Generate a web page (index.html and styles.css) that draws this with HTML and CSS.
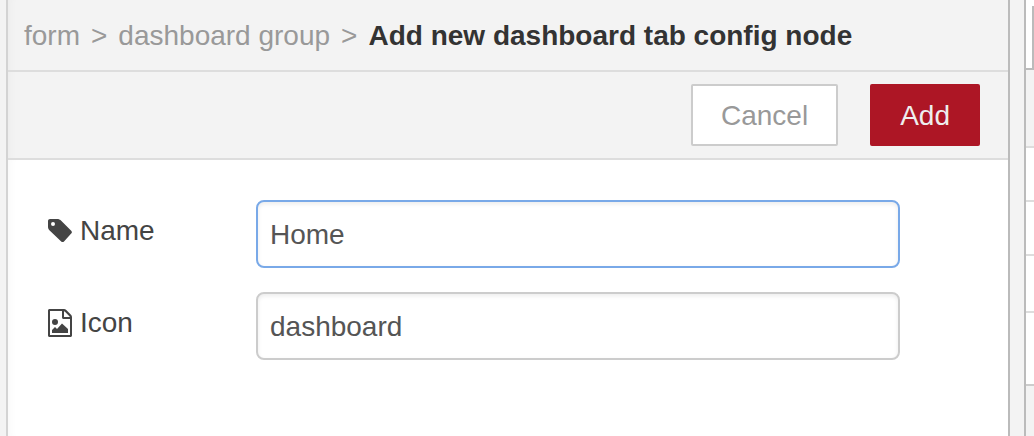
FILE: index.html
```html
<!DOCTYPE html>
<html lang="en">
<head>
<meta charset="utf-8">
<title>Add new dashboard tab config node</title>
<link rel="stylesheet" href="styles.css">
</head>
<body>
<div class="editor">
  <main class="tray">
    <header class="tray-header">
      <nav class="breadcrumbs" aria-label="Breadcrumb">
        <span>form</span>
        <span>&gt;</span>
        <span>dashboard group</span>
        <span>&gt;</span>
        <strong class="current">Add new dashboard tab config node</strong>
      </nav>
    </header>
    <div class="toolbar">
      <button type="button" class="button">Cancel</button>
      <button type="button" class="button primary">Add</button>
    </div>
    <form class="tray-body">
      <div class="form-row">
        <label for="node-name">
          <svg class="icon" viewBox="0 0 24 28" aria-hidden="true"><path fill-rule="evenodd" d="M2 2h7.5c1.1 0 2.4.6 3.200 1.300l10.500 10.500c.9.9.9 2 0 2.800l-7.200 7.800c-.8.8-2 .8-2.800 0L1.400 13.200C.6 12.400 0 11.100 0 10V4c0-1.100.9-2 2-2zM5 5a2 2 0 1 0 0 4a2 2 0 0 0 0-4z"/></svg>
          Name
        </label>
        <input id="node-name" class="focused" type="text" value="Home">
      </div>
      <div class="form-row">
        <label for="node-icon">
          <svg class="icon" viewBox="0 0 24 28" aria-hidden="true"><path fill-rule="evenodd" d="M1.500 0H16c.8 0 1.700.4 2.300 1l4.700 4.700c.6.6 1 1.500 1 2.300v18.500c0 .8-.7 1.500-1.500 1.500h-21C.7 28 0 27.300 0 26.500v-25C0 .7.7 0 1.500 0zM2 2v24h20V10h-6.500c-.8 0-1.500-.7-1.500-1.500V2zM16 2.200V8h5.800c-.1-.3-.2-.5-.4-.7l-4.700-4.700c-.2-.2-.4-.3-.7-.4z"/><circle cx="7" cy="13" r="3"/><path d="M4 24v-3l3-3 2 2 5-5.500 6 5.500v4z"/></svg>
          Icon
        </label>
        <input id="node-icon" type="text" value="dashboard">
      </div>
    </form>
  </main>
  <div class="separator"></div>
  <aside class="sidebar">
    <div class="sidebar-tabs"><div class="sidebar-tab"></div></div>
    <div class="sidebar-toolbar"></div>
    <div class="sidebar-row"></div>
    <div class="sidebar-row"></div>
    <div class="sidebar-row tall"></div>
    <div class="sidebar-row last"></div>
  </aside>
</div>
</body>
</html>
```
FILE: styles.css
```css
* {
  box-sizing: border-box;
}

body {
  margin: 0;
  background: #f3f3f3;
  color: #444;
  font: 28px/40px "Liberation Sans", Arial, sans-serif;
}

.editor {
  display: flex;
  min-height: 100vh;
  padding-left: 6px;
}

.tray {
  flex: 1;
  display: flex;
  flex-direction: column;
  border-left: 2px solid #d3d3d3;
  border-right: 2px solid #bbb;
  box-shadow: inset 8px 0 8px -6px rgba(0, 0, 0, 0.03);
}

.tray-header {
  padding: 16px 16px 14px;
  border-bottom: 2px solid #ddd;
  color: #999;
}

.breadcrumbs {
  display: flex;
  gap: 11px;
}

.current {
  color: #333;
}

.toolbar {
  display: flex;
  justify-content: flex-end;
  gap: 32px;
  padding: 12px 28px;
  border-bottom: 2px solid #ddd;
}

.button {
  padding: 10px 28px 8px;
  border: 2px solid #ccc;
  border-radius: 2px;
  background: #fff;
  color: #999;
  font: inherit;
}

.primary {
  border-color: #ad1625;
  background: #ad1625;
  color: #eee;
}

.tray-body {
  flex: 1;
  display: flex;
  flex-direction: column;
  gap: 24px;
  padding: 40px;
  background: #fff;
  box-shadow: inset 8px 0 8px -6px rgba(0, 0, 0, 0.03);
}

.form-row {
  display: flex;
  align-items: flex-start;
}

.form-row label {
  display: flex;
  align-items: center;
  gap: 8px;
  width: 208px;
  padding-top: 11px;
}

.icon {
  width: 24px;
  height: 28px;
  fill: #444;
}

.form-row input {
  width: 70%;
  height: 68px;
  padding: 10px 12px 8px;
  border: 2px solid #ccc;
  border-radius: 8px;
  outline: 0;
  background: #fff;
  box-shadow: inset 0 2px 4px rgba(0, 0, 0, 0.08);
  color: #555;
  font: inherit;
}

.form-row input.focused {
  border-color: #79a9e8;
}

.separator {
  width: 14px;
}

.sidebar {
  width: 10px;
  border-left: 2px solid #bbb;
}

.sidebar-tabs {
  padding-top: 6px;
  background: #fff;
}

.sidebar-tab {
  height: 64px;
  border-right: 2px solid #bbb;
  border-bottom: 2px solid #bbb;
}

.sidebar-toolbar {
  height: 78px;
  border-bottom: 2px solid #ddd;
}

.sidebar-row {
  height: 54px;
  border-bottom: 2px solid #ddd;
  background: #fff;
}

.sidebar-row.tall {
  height: 57px;
}

.sidebar-row.last {
  height: 73px;
  border-bottom-color: #ccc;
}
```
